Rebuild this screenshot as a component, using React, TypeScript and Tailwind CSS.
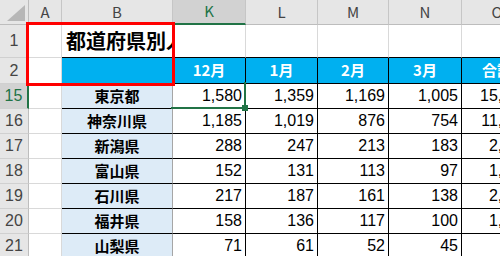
import React from "react";

const jp = "font-['Noto_Sans_CJK_JP','Noto_Sans',sans-serif]";
const num = "font-['Liberation_Sans_Narrow','Liberation_Sans',sans-serif]";

const months = ["12月", "1月", "2月", "3月", "合計"];

const rows = [
  { n: 15, pref: "東京都", v: ["1,580", "1,359", "1,169", "1,005", "15,926"] },
  { n: 16, pref: "神奈川県", v: ["1,185", "1,019", "876", "754", "11,541"] },
  { n: 17, pref: "新潟県", v: ["288", "247", "213", "183", "2,986"] },
  { n: 18, pref: "富山県", v: ["152", "131", "113", "97", "1,574"] },
  { n: 19, pref: "石川県", v: ["217", "187", "161", "138", "2,268"] },
  { n: 20, pref: "福井県", v: ["158", "136", "117", "100", "1,640"] },
  { n: 21, pref: "山梨県", v: ["71", "61", "52", "45", "635"] },
];

const colHdr = "flex items-center justify-center bg-[#e6e6e6] border-r border-b border-r-[#c6c6c6] border-b-[#bdbdbd] text-[15px] text-[#444]";
const rowHdr = "flex items-center justify-center bg-[#e6e6e6] border-r border-b border-r-[#bdbdbd] border-b-[#d0d0d0] text-[16px] text-[#444]";
const grid = "border-r border-b border-[#d9d9d9] bg-white";

export default function App() {
  return (
    <div className={`relative w-[500px] h-[256px] overflow-hidden bg-white ${jp}`}>
      <div className="grid grid-cols-[29px_33px_111px_73px_72px_71px_73px_71px] grid-rows-[25px_33px_26px_25px_25px_25px_25px_25px_25px_25px]">
        {/* column headers */}
        <div className="relative bg-[#e6e6e6] border-r border-b border-r-[#bdbdbd] border-b-[#bdbdbd]">
          <svg className="absolute left-[7px] top-[5px]" width="18" height="16" viewBox="0 0 18 16">
            <polygon points="18,0 18,16 0,16" fill="#b7b7b7" />
          </svg>
        </div>
        <div className={colHdr}>A</div>
        <div className={`${colHdr} border-r-[#a6a6a6]`}>B</div>
        <div className="flex items-center justify-center bg-[#d2d2d2] border-r border-r-[#c6c6c6] border-b-2 border-b-[#217346] text-[15px] text-[#217346]">K</div>
        <div className={colHdr}>L</div>
        <div className={colHdr}>M</div>
        <div className={colHdr}>N</div>
        <div className={colHdr}>O</div>

        {/* row 1 */}
        <div className={rowHdr}><span className={num}>1</span></div>
        <div className={grid} />
        <div className="flex items-center overflow-hidden whitespace-nowrap border-r border-b border-r-[#a6a6a6] border-b-black bg-white pl-[4px] text-[20px] font-bold text-black">
          都道府県別人口推移
        </div>
        {months.map((m) => (
          <div key={m} className="border-r border-b border-r-[#d9d9d9] border-b-black bg-white" />
        ))}

        {/* row 2 */}
        <div className={rowHdr}><span className={num}>2</span></div>
        <div className={grid} />
        <div className="bg-[#00b0f0] border-r border-b border-r-[#a6a6a6] border-b-black" />
        {months.map((m) => (
          <div
            key={m}
            className="flex items-center justify-center whitespace-nowrap overflow-hidden bg-[#00b0f0] border-r border-b border-black text-[15px] font-bold text-white"
          >
            {m}
          </div>
        ))}

        {/* data rows */}
        {rows.map((r) => (
          <React.Fragment key={r.n}>
            <div
              className={
                r.n === 15
                  ? "flex items-center justify-center bg-[#d2d2d2] border-r-2 border-b border-r-[#217346] border-b-[#d0d0d0] text-[16px] text-[#217346]"
                  : rowHdr
              }
            >
              <span className={num}>{r.n}</span>
            </div>
            <div className={grid} />
            <div className="flex items-center justify-center bg-[#ddebf7] border-r border-b border-r-[#a6a6a6] border-b-black text-[15px] font-bold text-black">
              {r.pref}
            </div>
            {r.v.map((v, i) => (
              <div
                key={i}
                className={`flex items-center justify-end overflow-hidden whitespace-nowrap bg-white border-r border-b border-black pr-[3px] text-[16px] text-black ${num}`}
              >
                {v}
              </div>
            ))}
          </React.Fragment>
        ))}
      </div>

      {/* red highlight box */}
      <div className="absolute left-[26px] top-[22px] w-[149px] h-[64px] border-[3px] border-[#ff0000]" />

      {/* active cell K15 */}
      <div className="absolute left-[171px] top-[82px] w-[75px] h-[27px] border-r-2 border-b-2 border-[#217346]" />
      <div className="absolute left-[242px] top-[105px] w-[6px] h-[6px] bg-[#217346]" />
    </div>
  );
}
